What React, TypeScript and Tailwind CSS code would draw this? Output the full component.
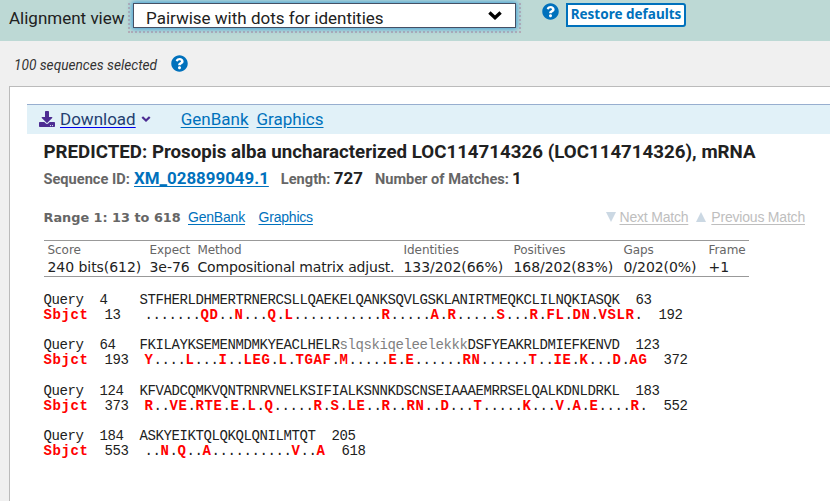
import { Fragment } from "react";
import { FaDownload, FaQuestionCircle } from "react-icons/fa";

type Row = {
  query: [string, string, string];
  subject: [string, string, string];
};

const rows: Row[] = [
  {
    query: ["4", "STFHERLDHMERTRNERCSLLQAEKELQANKSQVLGSKLANIRTMEQKCLILNQKIASQK", "63"],
    subject: ["13", ".......QD..N...Q.L...........R.....A.R.....S...R.FL.DN.VSLR.", "192"],
  },
  {
    query: ["64", "FKILAYKSEMENMDMKYEACLHELRslqskiqeleelekkkDSFYEAKRLDMIEFKENVD", "123"],
    subject: ["193", "Y....L...I..LEG.L.TGAF.M.....E.E......RN......T..IE.K...D.AG", "372"],
  },
  {
    query: ["124", "KFVADCQMKVQNTRNRVNELKSIFIALKSNNKDSCNSEIAAAEMRRSELQALKDNLDRKL", "183"],
    subject: ["373", "R..VE.RTE.E.L.Q.....R.S.LE..R..RN..D...T.....K...V.A.E....R.", "552"],
  },
  {
    query: ["184", "ASKYEIKTQLQKQLQNILMTQT", "205"],
    subject: ["553", "..N.Q..A..........V..A", "618"],
  },
];

const stats = [
  { label: "Score", value: "240 bits(612)", className: "w-[102px] tracking-[-0.05px]" },
  { label: "Expect", value: "3e-76", className: "w-[48px] tracking-[-0.05px]" },
  { label: "Method", value: "Compositional matrix adjust.", className: "w-[206px] tracking-[-0.18px]" },
  { label: "Identities", value: "133/202(66%)", className: "w-[110px] tracking-[-0.05px]" },
  { label: "Positives", value: "168/202(83%)", className: "w-[110px] tracking-[-0.05px]" },
  { label: "Gaps", value: "0/202(0%)", className: "w-[85px] tracking-[-0.05px]" },
  { label: "Frame", value: "+1", className: "w-[40px] tracking-[-0.05px]" },
];

function Chevron({ className }: { className: string }) {
  return (
    <svg viewBox="0 0 14 9" className={className} fill="none" stroke="currentColor" strokeWidth="3.4">
      <path d="M1.4 1.5 7 6.7l5.6-5.2" />
    </svg>
  );
}

// Residues that differ from the query are bold red; identities stay as dots.
function Residues({ text }: { text: string }) {
  return (
    <>
      {text.split(/([A-Z]+)/).map((part, i) =>
        /[A-Z]/.test(part) ? (
          <b key={i} className="tracking-[0.598px] text-[#f00]">{part}</b>
        ) : (
          <Fragment key={i}>{part}</Fragment>
        ),
      )}
    </>
  );
}

// Lower-case residues are masked low-complexity regions, shown in grey.
function Query({ text }: { text: string }) {
  return (
    <>
      {text.split(/([a-z]+)/).map((part, i) =>
        /[a-z]/.test(part) ? <span key={i} className="text-[#808080]">{part}</span> : <Fragment key={i}>{part}</Fragment>,
      )}
    </>
  );
}

export default function App() {
  return (
    <div className="h-[501px] w-[830px] overflow-hidden bg-[#f0f0f0] font-[Roboto,sans-serif] text-[#212121]">
      <div className="flex h-[41px] items-start bg-[#bdd9d5] pl-[9px]">
        <label className="w-[119px] pt-[6px] text-[17px] leading-6 whitespace-nowrap">Alignment view</label>
        <div className="mt-[3px] h-[30px] w-[393px] border-2 border-t-0 border-dotted border-[#b5abb5] px-[3px]">
          <div className="flex h-[25px] items-center border border-[#465064] bg-white pr-[13px] pl-[12px] shadow-[0_0_5px_1px_#3e9ed8]">
            <span className="grow pt-[5px] text-[17px] leading-5">Pairwise with dots for identities</span>
            <Chevron className="h-[9px] w-[14px] text-black" />
          </div>
        </div>
        <FaQuestionCircle className="mt-[3px] ml-[21px] size-[17px] shrink-0 text-[#0071bc] [background:radial-gradient(white_55%,transparent_56%)]" />
        <button className="mt-[3px] ml-[7px] h-[24px] w-[120px] rounded-[3px] rounded-l-none border-2 border-[#0071bc] bg-white pb-[2px] font-['Noto_Sans',sans-serif] text-[13.5px] leading-[18px] font-bold whitespace-nowrap text-[#0071bc]">
          Restore defaults
        </button>
      </div>

      <div className="flex h-[45px] items-start pt-[14px] pl-[14px]">
        <span className="w-[157px] text-[13.7px] leading-5 text-[#333] italic">100 sequences selected</span>
        <FaQuestionCircle className="size-[17px] shrink-0 text-[#0071bc] [background:radial-gradient(white_55%,transparent_56%)]" />
      </div>

      <main className="ml-[9px] h-[430px] border-t border-l border-[#bbb] bg-white pt-[17px] pl-[17px]">
        <div className="flex h-[30px] items-center border-t border-[#97aecf] bg-[#e1f1f8] pb-[2px] pl-[12px] text-[17px] leading-5 text-[#0071bc]">
          <FaDownload className="mt-px size-[16px] text-[#4c2c92]" />
          <a className="ml-[5px] text-[#243e70] underline decoration-[#0000ee] underline-offset-2">Download</a>
          <Chevron className="ml-[5px] h-[6px] w-[10px] text-[#4c2c92]" />
          <a className="ml-[30px] underline underline-offset-2">GenBank</a>
          <a className="ml-[8px] underline underline-offset-2">Graphics</a>
        </div>

        <div className="pl-[16.5px]">
          <h1 className="mt-[6px] text-[18.7px] leading-6 font-bold whitespace-nowrap tracking-[0.015px]">
            PREDICTED: Prosopis alba uncharacterized LOC114714326 (LOC114714326), mRNA
          </h1>
          <div className="mt-[2px] flex h-[24px] items-baseline text-[14.6px] leading-6 font-bold whitespace-nowrap text-[#666]">
            <span className="w-[90.5px]">Sequence ID:</span>
            <a className="text-[16.9px] text-[#0071bc] underline underline-offset-2">XM_028899049.1</a>
            <span className="ml-[12px] w-[53px]">Length:</span>
            <span className="text-[16.9px] text-[#212121]">727</span>
            <span className="ml-[12px]">Number of Matches:</span>
            <span className="ml-[3px] text-[16.9px] text-[#212121]">1</span>
          </div>

          <div className="mt-[17px] flex h-[20px] items-baseline font-['Liberation_Sans',sans-serif] text-[14px] leading-5 whitespace-nowrap text-[#0071bc]">
            <h2 className="w-[144.5px] font-['DejaVu_Sans',sans-serif] text-[12.85px] font-bold text-[#666]">Range 1: 13 to 618</h2>
            <a className="w-[70.5px] tracking-[-0.2px] underline underline-offset-2">GenBank</a>
            <a className="tracking-[-0.2px] underline underline-offset-2">Graphics</a>
            <div className="ml-auto flex items-baseline pr-[25px] tracking-[-0.2px] text-[#bebebe]">
              <svg viewBox="0 0 10 10" className="size-[10px]"><path d="M0 0h10L5 10z" fill="#cbd8e3" /></svg>
              <a className="ml-[4px] underline underline-offset-2">Next Match</a>
              <svg viewBox="0 0 10 10" className="ml-[8px] size-[10px]"><path d="M0 10h10L5 0z" fill="#cbd8e3" /></svg>
              <a className="ml-[5px] underline underline-offset-2">Previous Match</a>
            </div>
          </div>

          <div className="mt-[13px] flex h-[37px] w-[705px] border-y border-[#999] pl-[4px] font-['DejaVu_Sans',sans-serif] whitespace-nowrap">
            {stats.map((s) => (
              <div key={s.label} className={`${s.className} shrink-0`}>
                <div className="h-[17px] text-[12px] leading-[18px] text-[#666]">{s.label}</div>
                <div className="text-[14px] leading-[18px]">{s.value}</div>
              </div>
            ))}
          </div>

          <div className="mt-[16px] flex flex-col gap-[15.3px] font-['Liberation_Mono',monospace] text-[14px] leading-[15px] tracking-[-0.402px] whitespace-pre">
            {rows.map((r) => (
              <div key={r.query[0]}>
                <div>{"Query  "}{r.query[0].padEnd(5)}<Query text={r.query[1]} />{"  "}{r.query[2]}</div>
                <div><b className="tracking-[0.598px] text-[#f00]">Sbjct</b>{"  "}{r.subject[0].padEnd(5)}<Residues text={r.subject[1]} />{"  "}{r.subject[2]}</div>
              </div>
            ))}
          </div>
        </div>
      </main>
    </div>
  );
}
